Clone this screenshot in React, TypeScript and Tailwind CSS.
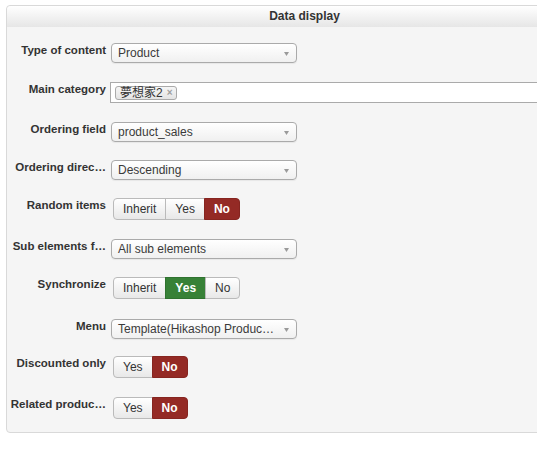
import React from 'react';

type Tone = 'red' | 'green';

type Choice = { label: string; tone?: Tone };

type Field =
    | { kind: 'select'; label: string; value: string; gap: string }
    | { kind: 'tags'; label: string; tags: string[]; gap: string }
    | { kind: 'toggle'; label: string; choices: Choice[]; gap: string };

const fields: Field[] = [
    { kind: 'select', label: 'Type of content', value: 'Product', gap: 'mt-0' },
    { kind: 'tags', label: 'Main category', tags: ['夢想家2'], gap: 'mt-[19px]' },
    { kind: 'select', label: 'Ordering field', value: 'product_sales', gap: 'mt-[19px]' },
    { kind: 'select', label: 'Ordering direc…', value: 'Descending', gap: 'mt-[18px]' },
    {
        kind: 'toggle',
        label: 'Random items',
        choices: [{ label: 'Inherit' }, { label: 'Yes' }, { label: 'No', tone: 'red' }],
        gap: 'mt-[18px]',
    },
    { kind: 'select', label: 'Sub elements f…', value: 'All sub elements', gap: 'mt-[19px]' },
    {
        kind: 'toggle',
        label: 'Synchronize',
        choices: [{ label: 'Inherit' }, { label: 'Yes', tone: 'green' }, { label: 'No' }],
        gap: 'mt-[18px]',
    },
    { kind: 'select', label: 'Menu', value: 'Template(Hikashop Produc…', gap: 'mt-[20px]' },
    {
        kind: 'toggle',
        label: 'Discounted only',
        choices: [{ label: 'Yes' }, { label: 'No', tone: 'red' }],
        gap: 'mt-[17px]',
    },
    {
        kind: 'toggle',
        label: 'Related produc…',
        choices: [{ label: 'Yes' }, { label: 'No', tone: 'red' }],
        gap: 'mt-[19px]',
    },
];

const Select: React.FC<{ value: string }> = ({ value }) => (
    <div className="ml-[5px] flex h-[20px] w-[186px] items-center rounded-[4px] border border-[#aaa] bg-gradient-to-b from-white to-[#f0f0f0] pl-[6px] text-[12px] text-[#3a3a3a] shadow-[0_1px_1px_rgba(0,0,0,0.06)]">
        <span className="min-w-0 flex-1 whitespace-nowrap leading-[18px]">{value}</span>
        <span className="flex w-[19px] shrink-0 justify-center pt-[2px]">
            <svg width="5" height="4" viewBox="0 0 5 4">
                <path d="M0 0h5L2.5 4z" fill="#9a9a9a" />
            </svg>
        </span>
    </div>
);

const TagInput: React.FC<{ tags: string[] }> = ({ tags }) => (
    <div className="ml-[4px] flex h-[21px] w-[490px] items-center border border-[#aaa] bg-white pl-[4px]">
        {tags.map((t) => (
            <span
                key={t}
                className="flex h-[14px] items-center gap-[4px] rounded-[3px] border border-[#aaa] bg-gradient-to-b from-[#f6f6f6] to-[#e4e4e4] pl-[4px] pr-[3px] text-[12px] leading-none text-[#333]"
            >
                {t}
                <span className="text-[10px] font-bold text-[#a0a0a0]">×</span>
            </span>
        ))}
    </div>
);

const toneClass = (tone?: Tone) =>
    tone === 'red'
        ? 'border-[#862520] bg-[#942a25] font-bold text-white'
        : tone === 'green'
          ? 'border-[#2f722f] bg-[#378137] font-bold text-white'
          : 'border-[#bababa] bg-gradient-to-b from-white to-[#e8e8e8] text-[#333]';

const Toggle: React.FC<{ choices: Choice[] }> = ({ choices }) => (
    <div className="ml-[7px] flex h-[22px]">
        {choices.map((c, i) => (
            <span
                key={c.label}
                className={`flex items-center border px-[9px] text-[12px] leading-none ${toneClass(c.tone)} ${
                    i === 0 ? 'rounded-l-[4px]' : '-ml-px'
                } ${i === choices.length - 1 ? 'rounded-r-[4px]' : ''}`}
            >
                {c.label}
            </span>
        ))}
    </div>
);

export default function App() {
    return (
        <div
            className="h-[463px] w-[537px] overflow-hidden bg-white pl-[6px] pt-[5px]"
            style={{ fontFamily: '"Liberation Sans", Arial, "Noto Sans CJK JP", sans-serif' }}
        >
            <div className="w-[597px] rounded-[4px] border border-[#d9d9d9] bg-[#f5f5f5]">
                <div className="h-[21px] rounded-t-[4px] bg-gradient-to-b from-white to-[#e6e6e6] text-center text-[12px] font-bold leading-[21px] text-[#333]">
                    Data display
                </div>

                <div className="flex flex-col pb-[13px] pt-[16px]">
                    {fields.map((f) => (
                        <div key={f.label} className={`flex items-start ${f.gap}`}>
                            <label className="w-[99px] shrink-0 whitespace-nowrap text-right text-[11.5px] font-bold leading-[14px] text-[#333]">
                                {f.label}
                            </label>
                            {f.kind === 'select' && <Select value={f.value} />}
                            {f.kind === 'tags' && <TagInput tags={f.tags} />}
                            {f.kind === 'toggle' && <Toggle choices={f.choices} />}
                        </div>
                    ))}
                </div>
            </div>
        </div>
    );
}
